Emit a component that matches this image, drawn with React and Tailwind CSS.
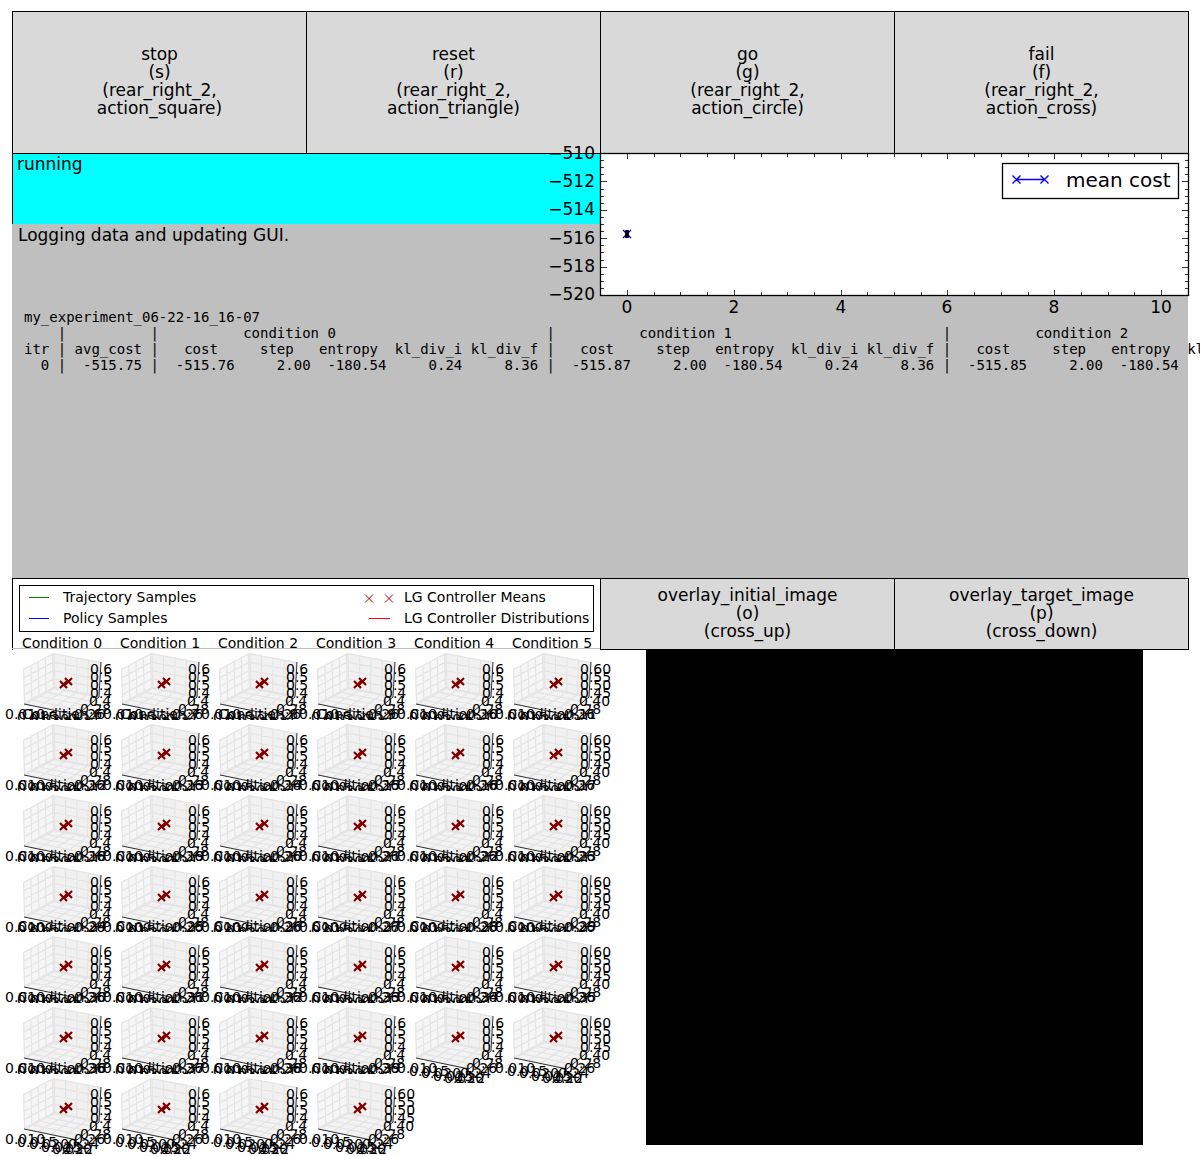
import React from "react";

const buttons = [
  { name: "stop", key: "(s)", combo: ["(rear_right_2,", "action_square)"] },
  { name: "reset", key: "(r)", combo: ["(rear_right_2,", "action_triangle)"] },
  { name: "go", key: "(g)", combo: ["(rear_right_2,", "action_circle)"] },
  { name: "fail", key: "(f)", combo: ["(rear_right_2,", "action_cross)"] },
];

const overlays = [
  ["overlay_initial_image", "(o)", "(cross_up)"],
  ["overlay_target_image", "(p)", "(cross_down)"],
];

const condHeader = (n) => "          condition " + n + "                         |";
const colHeader = "   cost     step   entropy  kl_div_i kl_div_f |";
const colValues = (cost) => "  " + cost + "     2.00  -180.54     0.24     8.36 |";

const logLines = [
  "    |          |" + [0, 1, 2].map(condHeader).join(""),
  "itr | avg_cost |" + [0, 1, 2].map(() => colHeader).join(""),
  "  0 |  -515.75 |" + ["-515.76", "-515.87", "-515.85"].map(colValues).join(""),
];

function ActionButton({ lines }) {
  return (
    <button
      type="button"
      className="flex flex-col items-center justify-center border-r border-b border-black bg-[#d9d9d9] pb-[3px] text-[17px] leading-[18px]"
    >
      {lines.map((l) => (
        <span key={l}>{l}</span>
      ))}
    </button>
  );
}

function CostChart() {
  const xs = Array.from({ length: 22 }, (_, i) => i);
  const ys = Array.from({ length: 21 }, (_, i) => i);
  const px = (v) => Math.round(27 + v * 53.4) + 0.5;
  const py = (i) => Math.round(i * 7.1) + 0.5;
  return (
    <svg viewBox="0 0 589 143" className="block w-full overflow-visible" fontFamily="DejaVu Sans" role="img" aria-label="mean cost chart">
      <rect x="0.5" y="0.5" width="588" height="142" fill="#fff" stroke="#000" strokeWidth="1.3" />
      <g stroke="#000" strokeWidth="0.8">
        {xs.map((i) => {
          const len = i % 4 === 0 ? 5 : 3;
          const x = px(i / 2);
          return <path key={i} d={`M${x} 142v${-len}M${x} 1v${len}`} />;
        })}
        {ys.map((i) => {
          const len = i % 4 === 0 ? 6 : 3;
          return <path key={i} d={`M1 ${py(i)}h${len}M588 ${py(i)}h${-len}`} />;
        })}
      </g>
      <g fontSize="17" textAnchor="end">
        {[510, 512, 514, 516, 518, 520].map((v, i) => (
          <text key={v} x="-5" y={Math.round(i * 28.2) + 6}>{"−" + v}</text>
        ))}
      </g>
      <g fontSize="17" textAnchor="middle">
        {[0, 2, 4, 6, 8, 10].map((v) => (
          <text key={v} x={Math.round(27 + v * 53.4)} y="160">{v}</text>
        ))}
      </g>
      <path d="M23 77l8 8m0-8l-8 8" stroke="#00f" strokeWidth="1.4" />
      <rect x="25" y="77" width="4" height="8" rx="1" />
      <rect x="402.5" y="10.5" width="176" height="35" fill="#fff" stroke="#000" strokeWidth="1.3" />
      <path d="M416.500 26.500H444.500M412.500 22.500l8 8m0-8l-8 8M440.500 22.500l8 8m0-8l-8 8" stroke="#00f" strokeWidth="1.4" />
      <text x="466" y="34" fontSize="20">mean cost</text>
    </svg>
  );
}

const lerp = (a, b, t) => [a[0] + (b[0] - a[0]) * t, a[1] + (b[1] - a[1]) * t];
const LT = [11, 20], LB = [12, 55], BT = [41, 4], BB = [42, 39], RT = [89, 13], RB = [87, 48], F = [65, 66];
const seg = (a, b) => `M${a[0]} ${a[1]}L${b[0]} ${b[1]}`;
const poly = (...p) => p.map((q) => q.join(",")).join(" ");
const gridPath = [0.02, 0.26, 0.5, 0.74, 0.98]
  .map((t) =>
    [
      seg(lerp(LT, BT, t), lerp(LB, BB, t)),
      seg(lerp(LB, BB, t), lerp(F, RB, t)),
      seg(lerp(BT, RT, t), lerp(BB, RB, t)),
      seg(lerp(BB, RB, t), lerp(LB, F, t)),
      seg(lerp(LT, LB, t), lerp(BT, BB, t)),
      seg(lerp(BT, BB, t), lerp(RT, RB, t)),
    ].join("")
  )
  .join("");

function Plot3D({ n }) {
  return (
    <svg width="98" height="71" className="block overflow-visible" fontFamily="DejaVu Sans" fontSize="14" role="img" aria-label={"Condition " + n}>
      <rect x="2" width="96" height="71" fill="#fff" />
      <polygon points={poly(LT, BT, BB, LB)} fill="#f6f6f6" />
      <polygon points={poly(BT, RT, RB, BB)} fill="#f1f1f1" />
      <polygon points={poly(LB, BB, RB, F)} fill="#f3f3f3" />
      <path d={gridPath} stroke="#e4e4e4" strokeWidth="1.2" fill="none" />
      <path d={seg(LB, F) + seg(F, RB) + seg(RB, RT)} stroke="#000" strokeWidth="0.8" />
      <path d="M48 32l7 7m0-7l-7 7M53 29l7 7m0-7l-7 7" stroke="#800000" strokeWidth="2.200" />
      <g>
        <text x="-7" y="70">0.010</text>
        <text x="5" y="73">0.015</text>
        <text x="17" y="75">0.020</text>
        <text x="29" y="78">0.025</text>
        <text x="40" y="80">0.030</text>
        <text x="50" y="80">0.22</text>
        <text x="56" y="75">0.24</text>
        <text x="62" y="70">0.26</text>
        <text x="68" y="65">0.28</text>
        <text x="78" y="25">0.60</text>
        <text x="78" y="33">0.55</text>
        <text x="78" y="41">0.50</text>
        <text x="78" y="49">0.45</text>
        <text x="77" y="57">0.40</text>
      </g>
      <text x="50" y="-1" textAnchor="middle">{"Condition " + n}</text>
    </svg>
  );
}

function Legend() {
  return (
    <div className="border-t border-l border-black px-[6px] pt-[6px] pb-[18px]">
      <div className="grid grid-cols-[1fr_189px] border border-black pt-px pb-[2px] text-[14px] leading-[21px]">
        <div className="flex items-center gap-[14px] pl-[9px]">
          <span className="h-px w-5 bg-[#008000]" />Trajectory Samples
        </div>
        <div className="relative whitespace-nowrap">
          <svg width="30" height="9" className="absolute top-[7px] -left-10">
            <path d="M1 .5l8 8m0-8l-8 8M21 .5l8 8m0-8l-8 8" stroke="#b00000" />
          </svg>
          LG Controller Means
        </div>
        <div className="flex items-center gap-[14px] pl-[9px]">
          <span className="h-px w-5 bg-[#0000ff]" />Policy Samples
        </div>
        <div className="relative whitespace-nowrap">
          <span className="absolute top-[10px] -left-[35px] h-px w-[21px] bg-[#f00]" />
          LG Controller Distributions
        </div>
      </div>
    </div>
  );
}

export default function App() {
  return (
    <div className="overflow-hidden bg-white pt-[11px] pb-[11px] font-['DejaVu_Sans',sans-serif] text-black">
      <div className="mx-3">
        <div className="-mr-px grid h-[143px] grid-cols-4 border-t border-l border-black">
          {buttons.map((b) => (
            <ActionButton key={b.name} lines={[b.name, b.key, ...b.combo]} />
          ))}
        </div>

        <div className="grid h-[424px] grid-cols-2 grid-rows-[70px_1fr] bg-[#bfbfbf]">
          <div className="border-l border-black bg-[#00ffff] px-1 text-[17px] leading-5">running</div>
          <div className="-mt-px -mr-px">
            <CostChart />
          </div>
          <div className="col-span-2">
            <p className="px-[6px] pt-px text-[17px] leading-5">Logging data and updating GUI.</p>
            <pre className="mt-16 pl-3 font-['DejaVu_Sans_Mono',monospace] text-[14px] leading-4">
              {"my_experiment_06-22-16_16-07\n" + logLines.join("\n")}
            </pre>
          </div>
        </div>

        <div className="grid grid-cols-2">
          <Legend />
          <div className="-mr-px grid grid-cols-2 border-t border-l border-black">
            {overlays.map((lines) => (
              <ActionButton key={lines[0]} lines={lines} />
            ))}
          </div>
          <div className="-mt-[2px] grid grid-cols-6 grid-rows-7 border-t border-[#bfbfbf]">
            {Array.from({ length: 40 }, (_, n) => (
              <div key={n} className="h-0 min-h-full">
                <Plot3D n={n} />
              </div>
            ))}
          </div>
          <div className="flex justify-center">
            <div className="h-[495px] w-[497px] bg-black" />
          </div>
        </div>
      </div>
    </div>
  );
}
